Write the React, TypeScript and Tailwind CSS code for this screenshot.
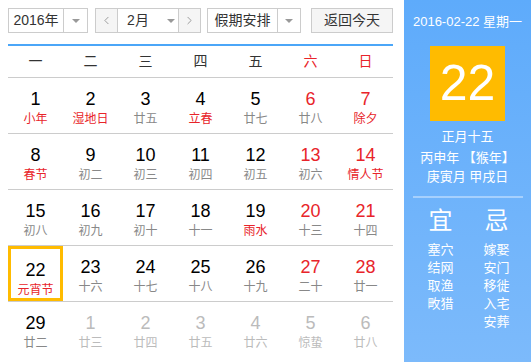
import { ChevronLeft, ChevronRight } from "lucide-react";

type Day = { d: number; lunar: string; red?: boolean; festival?: boolean; other?: boolean; today?: boolean };

const weekdays = ["一", "二", "三", "四", "五", "六", "日"];

const rows: Day[][] = [
	[
		{ d: 1, lunar: "小年", festival: true },
		{ d: 2, lunar: "湿地日", festival: true },
		{ d: 3, lunar: "廿五" },
		{ d: 4, lunar: "立春", festival: true },
		{ d: 5, lunar: "廿七" },
		{ d: 6, lunar: "廿八", red: true },
		{ d: 7, lunar: "除夕", red: true, festival: true },
	],
	[
		{ d: 8, lunar: "春节", festival: true },
		{ d: 9, lunar: "初二" },
		{ d: 10, lunar: "初三" },
		{ d: 11, lunar: "初四" },
		{ d: 12, lunar: "初五" },
		{ d: 13, lunar: "初六", red: true },
		{ d: 14, lunar: "情人节", red: true, festival: true },
	],
	[
		{ d: 15, lunar: "初八" },
		{ d: 16, lunar: "初九" },
		{ d: 17, lunar: "初十" },
		{ d: 18, lunar: "十一" },
		{ d: 19, lunar: "雨水", festival: true },
		{ d: 20, lunar: "十三", red: true },
		{ d: 21, lunar: "十四", red: true },
	],
	[
		{ d: 22, lunar: "元宵节", festival: true, today: true },
		{ d: 23, lunar: "十六" },
		{ d: 24, lunar: "十七" },
		{ d: 25, lunar: "十八" },
		{ d: 26, lunar: "十九" },
		{ d: 27, lunar: "二十", red: true },
		{ d: 28, lunar: "廿一", red: true },
	],
	[
		{ d: 29, lunar: "廿二" },
		{ d: 1, lunar: "廿三", other: true },
		{ d: 2, lunar: "廿四", other: true },
		{ d: 3, lunar: "廿五", other: true },
		{ d: 4, lunar: "廿六", other: true },
		{ d: 5, lunar: "惊蛰", other: true },
		{ d: 6, lunar: "廿八", other: true },
	],
];

const yi = ["塞穴", "结网", "取渔", "畋猎"];
const ji = ["嫁娶", "安门", "移徙", "入宅", "安葬"];

const cjk = "font-['Liberation_Sans','Noto_Sans_CJK_SC',sans-serif]";

function Caret() {
	return <span className="w-0 h-0 border-x-[4px] border-x-transparent border-t-[4px] border-t-[#999]" />;
}

function DayCell({ day }: { day: Day }) {
	const numColor = day.other ? "text-[#bbb]" : day.red ? "text-[#e8242a]" : "text-black";
	const lunarColor = day.other ? "text-[#bbb]" : day.festival ? "text-[#e8242a]" : "text-[#888]";
	return (
		<div
			className={`h-[55px] flex flex-col items-center pt-[10px] ${
				day.today ? "border-[3px] border-[#ffbb00] pt-[7px]" : ""
			}`}
		>
			<span className={`text-[18px] leading-[22px] ${numColor}`}>{day.d}</span>
			<span className={`text-[12px] leading-[16px] mt-[1px] ${lunarColor}`}>{day.lunar}</span>
		</div>
	);
}

export default function App() {
	return (
		<div className={`w-[531px] h-[362px] flex bg-white overflow-hidden ${cjk}`}>
			<div className="w-[404px] pl-2 pr-[11px] pt-2">
				{/* toolbar */}
				<div className="flex items-center h-[25px] text-[14px] text-[#333]">
					<div className="flex h-[25px] w-[80px] border border-[#ccc]">
						<span className="flex-1 flex items-center justify-center">2016年</span>
						<span className="w-[24px] border-l border-[#ccc] flex items-center justify-center">
							<Caret />
						</span>
					</div>
					<div className="flex h-[25px] w-[106px] ml-[7px] border border-[#ccc]">
						<span className="w-[22px] bg-[#f5f5f5] border-r border-[#ccc] flex items-center justify-center text-[#888]">
							<ChevronLeft size={13} strokeWidth={1.5} />
						</span>
						<span className="flex-1 flex items-center justify-center gap-[18px] pl-[6px]">
							2月
							<Caret />
						</span>
						<span className="w-[22px] bg-[#f5f5f5] border-l border-[#ccc] flex items-center justify-center text-[#888]">
							<ChevronRight size={13} strokeWidth={1.5} />
						</span>
					</div>
					<div className="flex h-[25px] w-[94px] ml-[6px] border border-[#ccc]">
						<span className="flex-1 flex items-center justify-center">假期安排</span>
						<span className="w-[23px] border-l border-[#ccc] flex items-center justify-center">
							<Caret />
						</span>
					</div>
					<div className="h-[25px] w-[82px] ml-[10px] border border-[#ccc] bg-[#f5f5f5] flex items-center justify-center">
						返回今天
					</div>
				</div>

				{/* weekdays */}
				<div className="mt-[11px] grid grid-cols-7 border-t-2 border-[#4ba6f8] border-b border-b-[#ccc] h-[34px] items-center text-[14px]">
					{weekdays.map((w, i) => (
						<span key={w} className={`text-center ${i >= 5 ? "text-[#e8242a]" : "text-[#333]"}`}>
							{w}
						</span>
					))}
				</div>

				{/* days */}
				{rows.map((row, ri) => (
					<div key={ri} className={`grid grid-cols-7 ${ri < rows.length - 1 ? "border-b border-[#ccc]" : ""}`}>
						{row.map((day, di) => (
							<DayCell key={di} day={day} />
						))}
					</div>
				))}
			</div>

			{/* side panel */}
			<div className="flex-1 bg-gradient-to-b from-[#5eabfb] to-[#7cbafb] text-white flex flex-col items-center">
				<div className="mt-[13px] text-[13px] leading-[18px]">2016-02-22 星期一</div>
				<div className="mt-[15px] w-[75px] h-[75px] bg-[#ffbb00] flex items-center justify-center text-[50px] font-['Liberation_Sans',sans-serif]">
					22
				</div>
				<div className="mt-[5px] text-[13px] leading-[18px] flex flex-col items-center">
					<span className="h-[22px] flex items-center">正月十五</span>
					<span className="h-[20px] flex items-center">丙申年 【猴年】</span>
					<span className="h-[18px] flex items-center">庚寅月 甲戌日</span>
				</div>
				<div className="mt-[10px] w-[110px] h-[2px] bg-[#a6d0fd]" />
				<div className="mt-[10px] w-full flex justify-center gap-[30px] pl-[2px]">
					<div className="flex flex-col items-center w-[26px]">
						<span className="text-[24px] leading-[26px]">宜</span>
						<div className="mt-[7px] flex flex-col text-[13px] leading-[18px]">
							{yi.map((t) => (
								<span key={t}>{t}</span>
							))}
						</div>
					</div>
					<div className="flex flex-col items-center w-[26px]">
						<span className="text-[24px] leading-[26px]">忌</span>
						<div className="mt-[7px] flex flex-col text-[13px] leading-[18px]">
							{ji.map((t) => (
								<span key={t}>{t}</span>
							))}
						</div>
					</div>
				</div>
			</div>
		</div>
	);
}
